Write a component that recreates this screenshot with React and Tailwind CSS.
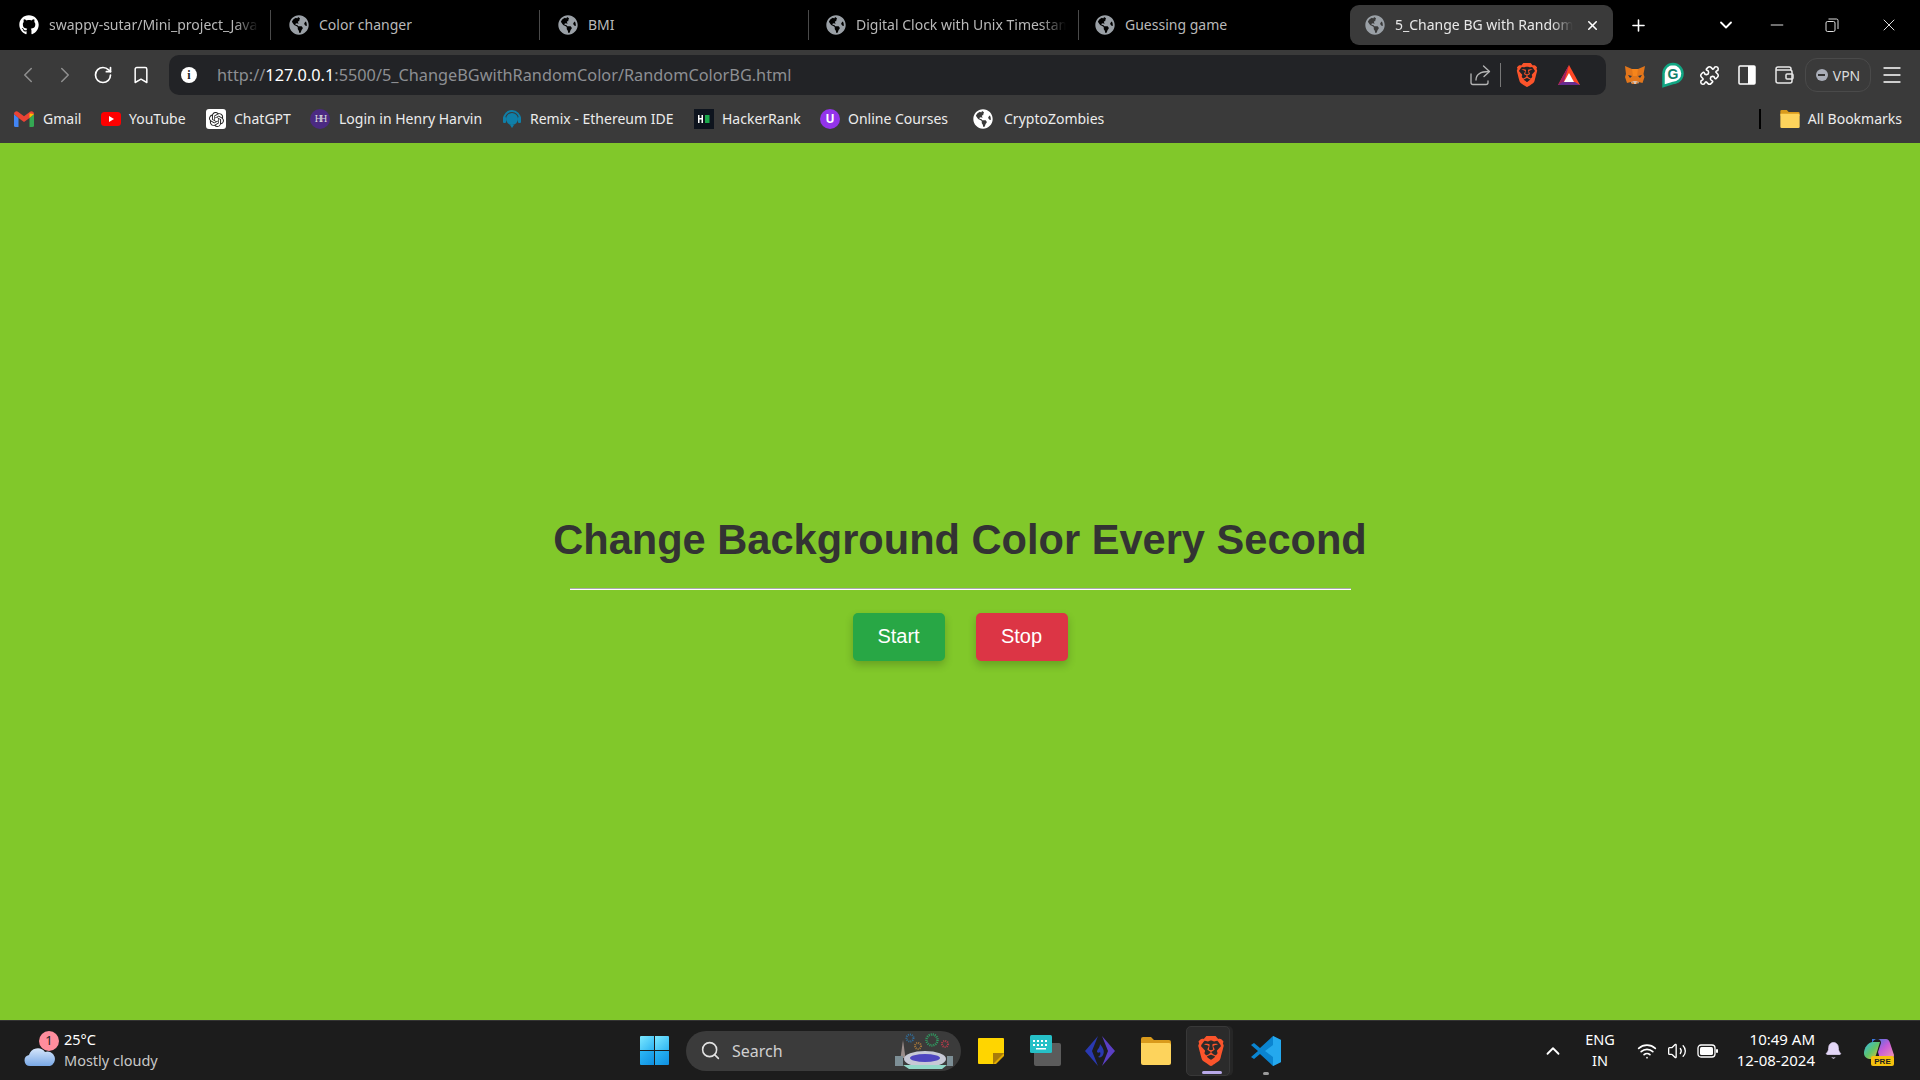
import { FaGithub, FaGlobeAmericas } from "react-icons/fa";
import { SiBrave, SiOpenai } from "react-icons/si";
import { ChevronLeft, ChevronRight, ChevronDown, ChevronUp, RotateCw, Bookmark, Plus, X, Minus, Search, Bell, Wifi, Volume2, Puzzle, Menu } from "lucide-react";

const uiFont = "font-['Noto_Sans','Open_Sans',sans-serif]";

const Globe = ({ className = "text-[#9aa0a6]" }) => (
  <FaGlobeAmericas className={className} size={20} />
);

const tabs = [
  { title: "swappy-sutar/Mini_project_Java", width: "w-[271px]", pad: "pl-[19px]", gap: "gap-[10px]", fade: true, github: true },
  { title: "Color changer", width: "w-[269px]", pad: "pl-[18px]", gap: "gap-[10px]" },
  { title: "BMI", width: "w-[269px]", pad: "pl-[18px]", gap: "gap-[10px]" },
  { title: "Digital Clock with Unix Timestamp", width: "w-[270px]", pad: "pl-[17px]", gap: "gap-[10px]", fade: true },
  { title: "Guessing game", width: "w-[271px]", pad: "pl-[16px]", gap: "gap-[10px]", last: true },
];

const bookmarks = [
  { label: "Gmail", width: "w-[87px]", gap: "gap-[9px]", icon: <GmailIcon /> },
  { label: "YouTube", width: "w-[105px]", icon: <YoutubeIcon /> },
  { label: "ChatGPT", width: "w-[104px]", icon: <span className="w-5 h-5 bg-white rounded-[3px] flex items-center justify-center text-[#222]"><SiOpenai size={15} /></span> },
  { label: "Login in Henry Harvin", width: "w-[192px]", gap: "gap-[9px]", icon: <span className="w-5 h-5 rounded-full bg-[#4b2a82] flex items-center justify-center text-[10px] tracking-[-2px] leading-none text-[#ddd] font-['Liberation_Serif',serif]">HH</span> },
  { label: "Remix - Ethereum IDE", width: "w-[192px]", icon: <RemixIcon /> },
  { label: "HackerRank", width: "w-[126px]", icon: <HackerRankIcon /> },
  { label: "Online Courses", width: "w-[153px]", icon: <span className="w-5 h-5 rounded-full bg-[#9333ea] flex items-center justify-center text-white text-[12px] font-bold leading-none">U</span> },
  { label: "CryptoZombies", width: "w-[132px]", icon: <Globe className="text-white" />, gap: "gap-[11px]" },
];

function GmailIcon() {
  return (
    <svg width="20" height="16" viewBox="0 0 20 16">
      <path d="M0 3v11.5A1.5 1.5 0 0 0 1.5 16H4.500V7z" fill="#4285f4" />
      <path d="M20 3v11.500a1.500 1.500 0 0 1-1.500 1.500h-3V7z" fill="#34a853" />
      <path d="M0 3c0-2.200 2.500-3.500 4.300-2.100L10 5.300 15.700.9C17.500-.5 20 .8 20 3l-4.500 4L10 11 4.500 7z" fill="#ea4335" />
      <path d="M15.500 2.400 20 3l-4.500 4z" fill="#fbbc04" />
    </svg>
  );
}

function YoutubeIcon() {
  return (
    <svg width="20" height="14" viewBox="0 0 20 14">
      <rect width="20" height="14" rx="3.500" fill="#f00" />
      <path d="M8 4l5 3-5 3z" fill="#fff" />
    </svg>
  );
}

function RemixIcon() {
  return (
    <svg width="20" height="20" viewBox="0 0 20 20">
      <path d="M2 10a8 8 0 0 1 16 0" fill="none" stroke="#0f7fa8" strokeWidth="2" />
      <circle cx="10" cy="10" r="6" fill="#0f7fa8" />
      <rect x="1" y="8" width="3" height="6" rx="1" fill="#0f7fa8" />
      <rect x="16" y="8" width="3" height="6" rx="1" fill="#0f7fa8" />
      <path d="M8 16h4l-2 3z" fill="#0f7fa8" />
    </svg>
  );
}

function HackerRankIcon() {
  return (
    <svg width="20" height="20" viewBox="0 0 20 20">
      <rect width="20" height="20" fill="#0e141e" />
      <path d="M4 6h1.500v3h2V6H9v8H7.500v-3.500h-2V14H4z" fill="#fff" />
      <rect x="11" y="6" width="4.500" height="8" fill="#1ba94c" />
    </svg>
  );
}

function ShareIcon() {
  return (
    <svg width="22" height="22" viewBox="0 0 22 22" fill="none" stroke="#b5b5b5" strokeWidth="1.300" strokeLinecap="round" strokeLinejoin="round">
      <path d="M2 10v8.500A2 2 0 0 0 4 20.500h13a2 2 0 0 0 2-2V17" />
      <path d="M7 16c0-5.500 4-8.500 13-8.500" />
      <path d="M14.500 2 20.500 7.500 15 12.500" />
    </svg>
  );
}

function BatIcon() {
  return (
    <svg width="24" height="24" viewBox="0 0 24 24">
      <path d="M12 2 1 22h22z" fill="#ff4724" />
      <path d="M12 2 1 22l5.500-2z" fill="#9e1f63" />
      <path d="M1 22h22l-5-3H6z" fill="#662d91" />
      <path d="M12 10 7 19h10z" fill="#fff" />
    </svg>
  );
}

function FoxIcon() {
  return (
    <svg width="22" height="22" viewBox="0 0 22 22">
      <path d="M1 2l7 3h6l7-3-1.500 8 1 3-2 6-4-1-1.500 2h-5L7 18l-4 1-2-6 1-3z" fill="#e2761b" />
      <path d="M8 5h6l-1 7H9z" fill="#f6851b" />
      <path d="M4 11l4 1-2 2zM18 11l-4 1 2 2z" fill="#233447" />
      <path d="M9 17h4l-1 3h-2z" fill="#d7c1b3" />
      <path d="M7 18l2-1-1 3zM15 18l-2-1 1 3z" fill="#c0ad9e" />
    </svg>
  );
}

function GrammarlyIcon() {
  return (
    <svg width="22" height="26" viewBox="0 0 22 26">
      <path d="M11 2a9.500 9.500 0 0 0-9.500 9.500V24l9.500-3a9.500 9.500 0 0 0 0-19z" fill="#fff" stroke="#11a683" strokeWidth="2.500" />
      <text x="11" y="16.500" fontSize="14" fontWeight="700" textAnchor="middle" fill="#11806a" fontFamily="Liberation Sans, sans-serif">G</text>
    </svg>
  );
}

function RestoreIcon() {
  return (
    <svg width="14" height="14" viewBox="0 0 14 14" fill="none" stroke="#ddd" strokeWidth="1">
      <rect x="1" y="3.500" width="9" height="10" rx="1.500" />
      <path d="M3.500 1H11.500a1.500 1.500 0 0 1 1.500 1.500V11" />
    </svg>
  );
}

function SidebarIcon() {
  return (
    <svg width="18" height="20" viewBox="0 0 18 20">
      <rect x="1" y="1" width="16" height="18" rx="1" fill="none" stroke="#fff" strokeWidth="1.500" />
      <rect x="10" y="1" width="7" height="18" fill="#fff" />
    </svg>
  );
}

function WalletIcon() {
  return (
    <svg width="20" height="20" viewBox="0 0 20 20" fill="none" stroke="#e8e8e8" strokeWidth="1.500">
      <path d="M17 5V4a2 2 0 0 0-2-2H4a2 2 0 0 0-2 2v12a2 2 0 0 0 2 2h12a2 2 0 0 0 2-2V7a2 2 0 0 0-2-2H2" />
      <rect x="12" y="9" width="7" height="5" rx="1" />
    </svg>
  );
}

function WindowsIcon() {
  return (
    <svg width="29" height="29" viewBox="0 0 29 29">
      <defs>
        <linearGradient id="winTop" x1="0" y1="0" x2="1" y2="1">
          <stop offset="0" stopColor="#7ce8ff" />
          <stop offset="1" stopColor="#2eb4f2" />
        </linearGradient>
        <linearGradient id="winBottom" x1="0" y1="0" x2="1" y2="1">
          <stop offset="0" stopColor="#2cb8f5" />
          <stop offset="1" stopColor="#0f8fe0" />
        </linearGradient>
      </defs>
      <path d="M1 0h13v14H0V1a1 1 0 0 1 1-1z" fill="url(#winTop)" />
      <path d="M15 0h13a1 1 0 0 1 1 1v13H15z" fill="url(#winTop)" />
      <path d="M0 15h14v14H1a1 1 0 0 1-1-1z" fill="url(#winBottom)" />
      <path d="M15 15h14v13a1 1 0 0 1-1 1H15z" fill="url(#winBottom)" />
    </svg>
  );
}

function WeatherIcon() {
  return (
    <svg width="32" height="24" viewBox="0 0 32 24">
      <defs>
        <linearGradient id="cloud" x1="0" y1="0" x2="0" y2="1">
          <stop offset="0" stopColor="#d6e6fb" />
          <stop offset="1" stopColor="#79a8e6" />
        </linearGradient>
      </defs>
      <path d="M6 23a5.500 5.500 0 0 1-1-10.900A9 9 0 0 1 21 9a6.500 6.500 0 0 1 5 14z" fill="url(#cloud)" />
    </svg>
  );
}

function CityIcon() {
  return (
    <svg width="58" height="38" viewBox="0 0 58 38">
      <circle cx="15" cy="6" r="3.500" fill="none" stroke="#2f6f9f" strokeWidth="2" strokeDasharray="1 1" />
      <circle cx="37" cy="8" r="5.500" fill="none" stroke="#2f9f62" strokeWidth="2.500" strokeDasharray="1 1" />
      <circle cx="23" cy="14" r="3" fill="none" stroke="#a8793a" strokeWidth="2" strokeDasharray="1 1" />
      <circle cx="50" cy="12" r="3" fill="none" stroke="#b83a4a" strokeWidth="2" strokeDasharray="1 1" />
      <path d="M8 8l2.500 18H5.500z" fill="#9a8d8a" />
      <rect x="0" y="24" width="8" height="10" fill="#7d8f96" />
      <rect x="52" y="24" width="6" height="10" fill="#7d8f96" />
      <ellipse cx="30" cy="27" rx="21" ry="8" fill="#c7c9d6" />
      <ellipse cx="30" cy="26" rx="15" ry="4" fill="#4f46c0" />
      <path d="M8 33h44l-5 4H14z" fill="#93d8c8" />
    </svg>
  );
}

function StickyIcon() {
  return (
    <svg width="26" height="26" viewBox="0 0 26 26">
      <path d="M1 0h24a1 1 0 0 1 1 1v14L15 26H1a1 1 0 0 1-1-1V1a1 1 0 0 1 1-1z" fill="#ffd500" />
      <path d="M26 15H15v11z" fill="#a87c0a" />
      <path d="M26 15 15 26l3 0 8-8z" fill="#e2a900" />
    </svg>
  );
}

function KeyboardIcon() {
  return (
    <svg width="31" height="31" viewBox="0 0 31 31">
      <rect x="4" y="8" width="27" height="23" rx="2" fill="#5b5b5b" />
      <rect x="0" y="0" width="22" height="18" rx="1.500" fill="#26c0c7" />
      <g fill="#fff">
        <rect x="3" y="5" width="2" height="2" /><rect x="7" y="5" width="2" height="2" /><rect x="11" y="5" width="2" height="2" /><rect x="15" y="5" width="2" height="2" />
        <rect x="3" y="9" width="2" height="2" /><rect x="7" y="9" width="2" height="2" /><rect x="11" y="9" width="2" height="2" /><rect x="15" y="9" width="2" height="2" />
        <rect x="6" y="13" width="10" height="1.500" />
      </g>
    </svg>
  );
}

function DevIcon() {
  return (
    <svg width="32" height="32" viewBox="0 0 32 32">
      <path d="M14 1 1 16l13 15-6-15z" fill="#2a39b0" />
      <path d="M18 1l13 15-13 15 6-15z" fill="#5b3fc4" />
      <path d="M16 9c3 4 5 7 3 11-1 2-3 3-5 2 2-1 3-3 2-5-1 1-2 1-3 0 0-3 3-4 3-8z" fill="#2a39b0" />
    </svg>
  );
}

function FolderIcon({ w = 30, h = 28 }) {
  return (
    <svg width={w} height={h} viewBox="0 0 30 28">
      <path d="M0 2a2 2 0 0 1 2-2h8l3 3h15a2 2 0 0 1 2 2v4H0z" fill="#d99a1c" />
      <path d="M0 6h28a2 2 0 0 1 2 2v18a2 2 0 0 1-2 2H2a2 2 0 0 1-2-2z" fill="#fdd35c" />
    </svg>
  );
}

function VsCodeIcon() {
  return (
    <svg width="32" height="32" viewBox="0 0 32 32">
      <path d="M23 1l8 4v22l-8 4-13-12-6 5-3-2 7-6-7-6 3-2 6 5z" fill="#0a84d0" />
      <path d="M23 1l8 4v22l-8 4V22l-8-6 8-6z" fill="#24a8ee" />
    </svg>
  );
}

function BatteryIcon() {
  return (
    <svg width="21" height="14" viewBox="0 0 21 14" fill="none">
      <rect x="1" y="1" width="17" height="12" rx="3" stroke="#fff" strokeWidth="1.300" />
      <rect x="3" y="3" width="13" height="8" rx="1.500" fill="#fff" />
      <rect x="19" y="5" width="2" height="4" rx="1" fill="#fff" />
    </svg>
  );
}

function CopilotIcon() {
  return (
    <svg width="30" height="30" viewBox="0 0 30 30">
      <defs>
        <linearGradient id="copL" x1="0" y1="0" x2="1" y2="1">
          <stop offset="0" stopColor="#35b8e6" />
          <stop offset="0.5" stopColor="#5fc46a" />
          <stop offset="1" stopColor="#f5c22e" />
        </linearGradient>
        <linearGradient id="copR" x1="0" y1="0" x2="1" y2="1">
          <stop offset="0" stopColor="#2c7ce0" />
          <stop offset="0.5" stopColor="#c65bd8" />
          <stop offset="1" stopColor="#f59ab0" />
        </linearGradient>
      </defs>
      <path d="M8 3h14c2 0 3 1 4 4l4 12c0 3-2 4-4 4H16l-2-7 3-9c0-2-1-4-4-4-2 0-4 2-5 4z" fill="url(#copR)" />
      <path d="M9 6h7l-4 13c-1 2-2 4-5 4-4 0-7-2-7-6 0-5 4-11 9-11z" fill="url(#copL)" />
      <rect x="7" y="20" width="23" height="10" rx="2" fill="#f5c10e" />
      <text x="18.500" y="28" fontSize="8" fontWeight="700" textAnchor="middle" fill="#1c1c1c" fontFamily="Liberation Sans, sans-serif">PRE</text>
    </svg>
  );
}

function TabStrip() {
  return (
    <div className={`h-[50px] bg-black flex items-center text-[14px] ${uiFont}`}>
      {tabs.map((t) => (
        <div key={t.title} className={`${t.width} ${t.pad} ${t.gap} h-[30px] flex items-center ${t.last ? "" : "border-r border-[#4a4a4a]"}`}>
          {t.github ? <FaGithub className="text-white shrink-0" size={20} /> : <Globe />}
          <span className={`pb-[2px] overflow-hidden whitespace-nowrap text-[#b9b9b9] ${t.fade ? "w-[210px] [mask-image:linear-gradient(to_right,black_88%,transparent)]" : ""}`}>
            {t.title}
          </span>
        </div>
      ))}
      <div className="w-[263px] h-[40px] rounded-[9px] bg-[#3a3a3a] flex items-center pl-[15px] gap-[10px] text-[#e8e8e8]">
        <Globe />
        <span className="pb-[2px] w-[178px] overflow-hidden whitespace-nowrap [mask-image:linear-gradient(to_right,black_88%,transparent)]">5_Change BG with Random Color</span>
        <X size={15} strokeWidth={2.5} className="text-white ml-[2px]" />
      </div>
      <Plus size={19} className="text-white ml-[16px]" />
      <ChevronDown size={20} className="text-white ml-[68px]" strokeWidth={2.2} />
      <Minus size={20} className="text-[#ddd] ml-[31px]" strokeWidth={1.2} />
      <span className="ml-[38px]"><RestoreIcon /></span>
      <X size={20} className="text-[#ddd] ml-[40px]" strokeWidth={1.2} />
    </div>
  );
}

function Toolbar() {
  return (
    <div className={`h-[45px] bg-[#3a3a3a] flex items-center pt-[5px] ${uiFont}`}>
      <div className="w-[46px] flex justify-end pr-[5px]"><ChevronLeft size={26} strokeWidth={1.4} className="text-[#8f8f8f]" /></div>
      <div className="w-[38px] flex justify-center"><ChevronRight size={26} strokeWidth={1.4} className="text-[#8f8f8f]" /></div>
      <div className="w-[38px] flex justify-center"><RotateCw size={20} strokeWidth={2} className="text-white" /></div>
      <div className="w-[38px] flex justify-center"><Bookmark size={20} strokeWidth={1.8} className="text-white" /></div>
      <div className="ml-[9px] w-[1437px] h-[40px] rounded-[10px] bg-[#222326] flex items-center">
        <span className="ml-[12px] w-4 h-4 rounded-full bg-white text-[#222326] text-[12px] font-bold flex items-center justify-center leading-none font-['Liberation_Serif',serif]">i</span>
        <span className="ml-[20px] text-[16.3px] text-[#8d8f93] whitespace-nowrap">
          http://<span className="text-white">127.0.0.1</span>:5500/5_ChangeBGwithRandomColor/RandomColorBG.html
        </span>
        <div className="ml-auto flex items-center">
          <ShareIcon />
          <span className="ml-[9px] w-px h-[24px] bg-[#777]" />
          <SiBrave size={24} className="ml-[14px] text-[#fb542b]" />
          <span className="ml-[18px] mr-[25px]"><BatIcon /></span>
        </div>
      </div>
      <span className="ml-[18px]"><FoxIcon /></span>
      <span className="ml-[16px]"><GrammarlyIcon /></span>
      <Puzzle size={21} strokeWidth={1.8} className="ml-[15px] text-white" />
      <span className="ml-[18px]"><SidebarIcon /></span>
      <span className="ml-[18px]"><WalletIcon /></span>
      <div className="ml-[11px] w-[66px] h-[34px] rounded-[12px] border border-[#4a4a4a] flex items-center justify-center gap-[5px] text-[14px] text-[#dcdcdc]">
        <span className="w-3 h-3 rounded-full bg-[#a9adb8] flex items-center justify-center"><span className="w-[7px] h-[2px] bg-[#333]" /></span>
        VPN
      </div>
      <Menu size={24} strokeWidth={1.3} className="ml-[9px] text-white" />
    </div>
  );
}

function BookmarksBar() {
  return (
    <div className={`h-[48px] bg-[#3a3a3a] flex items-center pl-[14px] text-[14px] text-[#ececec] ${uiFont}`}>
      {bookmarks.map((b) => (
        <div key={b.label} className={`${b.width} flex items-center ${b.gap || "gap-[8px]"} whitespace-nowrap`}>
          <span className="w-5 h-5 flex items-center justify-center shrink-0">{b.icon}</span>
          <span className="pb-[2px]">{b.label}</span>
        </div>
      ))}
      <span className="ml-auto w-[2px] h-[20px] bg-black" />
      <span className="ml-[19px]"><FolderIcon w={20} h={18} /></span>
      <span className="ml-[8px] mr-[18px] pb-[2px] whitespace-nowrap">All Bookmarks</span>
    </div>
  );
}

function Taskbar() {
  return (
    <div className={`h-[60px] bg-[#1c1c1c] border-t border-[#333] flex items-center text-white ${uiFont}`}>
      <div className="w-[640px] flex items-center pl-[24px]">
        <div className="relative w-[32px] h-[32px] flex items-end">
          <WeatherIcon />
          <span className="absolute left-[15px] -top-[4px] w-5 h-5 rounded-full bg-[#ff8d9d] text-[#222] text-[13px] leading-none flex items-center justify-center">1</span>
        </div>
        <div className="ml-[8px] pb-[2px] text-[14.5px] leading-[21px]">
          <div>25°C</div>
          <div className="text-[#c8c8c8]">Mostly cloudy</div>
        </div>
      </div>
      <WindowsIcon />
      <div className="ml-[17px] w-[275px] h-[40px] rounded-full bg-[#3b3b3b] flex items-center pl-[14px] text-[16px] text-[#d0d0d0]">
        <Search size={21} strokeWidth={1.8} className="text-[#e2e2e2]" />
        <span className="ml-[11px]">Search</span>
        <span className="ml-auto mr-[8px]"><CityIcon /></span>
      </div>
      <span className="ml-[17px]"><StickyIcon /></span>
      <span className="ml-[26px]"><KeyboardIcon /></span>
      <span className="ml-[23px]"><DevIcon /></span>
      <span className="ml-[25px]"><FolderIcon /></span>
      <div className="relative ml-[15px] w-[44px] h-[50px] rounded-[5px] bg-[#2b2b2b] border border-[#383838] shadow-[3px_0_0_#262626] flex items-center justify-center pl-[6px]">
        <SiBrave size={30} className="text-[#fb542b]" />
        <span className="absolute bottom-[1px] left-[15px] w-5 h-[3px] rounded-full bg-[#b8a9e8]" />
      </div>
      <div className="relative ml-[20px] w-[32px] h-[50px] flex items-center justify-center">
        <VsCodeIcon />
        <span className="absolute bottom-[1px] left-[13px] w-[6px] h-[3px] rounded-full bg-[#9a9a9a]" />
      </div>
      <ChevronUp size={22} strokeWidth={2} className="ml-[260px]" />
      <div className="ml-[10px] w-[52px] pb-[1px] text-center text-[14.5px] leading-[21px]">
        <div>ENG</div>
        <div>IN</div>
      </div>
      <Wifi size={20} strokeWidth={2} className="ml-[11px]" />
      <Volume2 size={20} strokeWidth={1.6} className="ml-[10px]" />
      <span className="ml-[10px]"><BatteryIcon /></span>
      <div className="ml-[19px] w-[78px] pb-[1px] flex flex-col items-end text-[15px] leading-[21px] whitespace-nowrap">
        <div>10:49 AM</div>
        <div>12-08-2024</div>
      </div>
      <Bell size={19} fill="#e3d6f7" strokeWidth={1} className="ml-[9px] text-[#e3d6f7]" />
      <span className="ml-[21px]"><CopilotIcon /></span>
    </div>
  );
}

export default function App() {
  return (
    <div className="w-[1920px] h-[1080px] overflow-hidden flex flex-col">
      <TabStrip />
      <Toolbar />
      <BookmarksBar />
      <main className="flex-1 bg-[#81c82a] flex flex-col items-center justify-center pt-[15px] font-['Liberation_Sans',sans-serif]">
        <h1 className="text-[41.6px] leading-[46px] font-bold text-[#333] whitespace-nowrap">Change Background Color Every Second</h1>
        <hr className="w-[781px] mt-[25px] border-t-0 h-[2px] bg-[linear-gradient(#a9a9a9_50%,#fff_50%)]" />
        <div className="mt-[23px] flex gap-[31px]">
          <button className="w-[92px] h-[48px] pb-[2px] rounded-[5px] bg-[#28a745] text-white text-[20px] shadow-[0_4px_8px_rgba(0,0,0,0.2)]">Start</button>
          <button className="w-[92px] h-[48px] pb-[2px] rounded-[5px] bg-[#dc3545] text-white text-[20px] shadow-[0_4px_8px_rgba(0,0,0,0.2)]">Stop</button>
        </div>
      </main>
      <Taskbar />
    </div>
  );
}
